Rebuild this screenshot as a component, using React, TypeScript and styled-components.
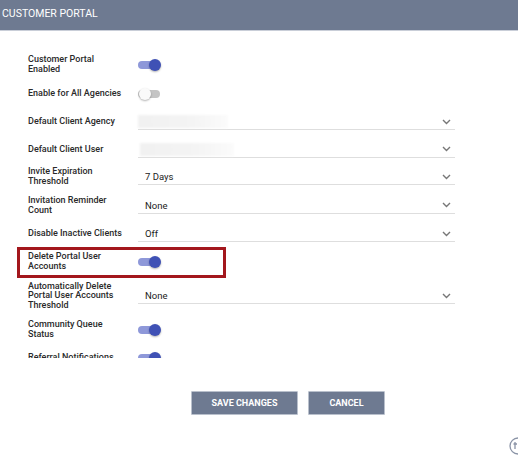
import React from "react";
import styled, { createGlobalStyle } from "styled-components";

const Global = createGlobalStyle`
  html, body { margin: 0; padding: 0; background: #fff; }
  body { font-family: Roboto, "Liberation Sans", Arial, sans-serif; width: 518px; height: 464px; overflow: hidden; position: relative; }
`;

const Header = styled.div`
  background: #6e7a91;
  border-bottom: 1px solid #c9ced8;
  display: flex;
  align-items: center;
  padding-left: 2px;
  padding-bottom: 4px;
  box-sizing: border-box;
  height: 31px;
  color: #fff;
  font-size: 10.5px;
`;

const Scroll = styled.div`
  height: 327px;
  overflow: hidden;
  padding: 19px 0 0 28px;
  box-sizing: border-box;
  width: 455px;
`;

const Row = styled.div<{ $h: number }>`
  display: flex;
  align-items: center;
  height: ${(p) => p.$h}px;
`;

const Label = styled.div`
  width: 110px;
  flex: 0 0 110px;
  font-size: 9px;
  line-height: 9.6px;
  font-weight: 500;
  color: #2a2a2a;
`;

const Highlight = styled.div`
  display: flex;
  align-items: center;
  height: 31px;
  width: 209px;
  margin-left: -11px;
  padding-left: 8px;
  border: 3px solid #a3171d;
  box-sizing: border-box;
`;

const Track = styled.span<{ $on: boolean }>`
  position: relative;
  display: inline-block;
  width: 22px;
  height: 8px;
  border-radius: 4px;
  background: ${(p) => (p.$on ? "#8e98d9" : "#c4c4c4")};
`;

const Knob = styled.span<{ $on: boolean }>`
  position: absolute;
  top: -2px;
  left: ${(p) => (p.$on ? "11px" : "1px")};
  width: 12px;
  height: 12px;
  border-radius: 50%;
  background: ${(p) => (p.$on ? "#3f51b5" : "#fafafa")};
  box-shadow: 0 1px 2px rgba(0, 0, 0, 0.3);
`;

const Select = styled.div`
  flex: 1;
  height: 16px;
  border-bottom: 1px solid #dedede;
  display: flex;
  align-items: center;
  padding: 0 4px 0 7px;
  box-sizing: border-box;
  font-size: 9.5px;
  color: #222;
`;

const Value = styled.span`
  flex: 1;
  display: flex;
  align-items: center;
`;

const Blur = styled.span<{ $w: number; $dx: number }>`
  display: inline-block;
  margin-left: ${(p) => p.$dx}px;
  width: ${(p) => p.$w}px;
  height: 13px;
  background: linear-gradient(to right, #f1f1f1 0%, #f4f4f4 60%, #fbfbfb 100%);
  filter: blur(1px);
`;

const Buttons = styled.div`
  display: flex;
  gap: 10px;
  padding-left: 191px;
  margin-top: 33px;
`;

const Button = styled.button<{ $w: number }>`
  width: ${(p) => p.$w}px;
  height: 24px;
  background: #6e7a91;
  border: 1px solid #b9c0cc;
  border-radius: 1px;
  color: #fff;
  font-family: Roboto, "Liberation Sans", Arial, sans-serif;
  font-weight: 700;
  font-size: 9px;
  padding: 0;
  cursor: pointer;
`;

const Widget = styled.svg`
  position: absolute;
  left: 508px;
  top: 436px;
`;

const Toggle = ({ on }: { on: boolean }) => (
  <Track $on={on}>
    <Knob $on={on} />
  </Track>
);

const Chevron = () => (
  <svg width="9" height="6" viewBox="0 0 9 6">
    <polyline points="1,1 4.5,4.5 8,1" fill="none" stroke="#777" strokeWidth="1.4" />
  </svg>
);

const Sel = ({ children }: { children?: React.ReactNode }) => (
  <Select>
    <Value>{children}</Value>
    <Chevron />
  </Select>
);

export default function App() {
  return (
    <>
      <Global />
      <Header>CUSTOMER PORTAL</Header>
      <Scroll>
        <Row $h={29}>
          <Label>Customer Portal<br />Enabled</Label>
          <Toggle on />
        </Row>
        <Row $h={29}>
          <Label>Enable for All Agencies</Label>
          <Toggle on={false} />
        </Row>
        <Row $h={28}>
          <Label>Default Client Agency</Label>
          <Sel><Blur $w={90} $dx={-7} /></Sel>
        </Row>
        <Row $h={27}>
          <Label>Default Client User</Label>
          <Sel><Blur $w={94} $dx={-5} /></Sel>
        </Row>
        <Row $h={28}>
          <Label>Invite Expiration<br />Threshold</Label>
          <Sel>7 Days</Sel>
        </Row>
        <Row $h={29}>
          <Label>Invitation Reminder<br />Count</Label>
          <Sel>None</Sel>
        </Row>
        <Row $h={28}>
          <Label>Disable Inactive Clients</Label>
          <Sel>Off</Sel>
        </Row>
        <Row $h={28}>
          <Highlight>
            <Label>Delete Portal User<br />Accounts</Label>
            <Toggle on />
          </Highlight>
        </Row>
        <Row $h={40}>
          <Label>Automatically Delete<br />Portal User Accounts<br />Threshold</Label>
          <Sel>None</Sel>
        </Row>
        <Row $h={28}>
          <Label>Community Queue<br />Status</Label>
          <Toggle on />
        </Row>
        <Row $h={28}>
          <Label>Referral Notifications</Label>
          <Toggle on />
        </Row>
      </Scroll>
      <Buttons>
        <Button $w={107}>SAVE CHANGES</Button>
        <Button $w={77}>CANCEL</Button>
      </Buttons>
      <Widget width="20" height="20" viewBox="0 0 20 20">
        <circle cx="10" cy="10" r="8" fill="#fff" stroke="#8a93a6" strokeWidth="1.3" />
        <path d="M7 6 V13 M5.5 8 H9" stroke="#8a93a6" strokeWidth="1.3" fill="none" />
      </Widget>
    </>
  );
}
